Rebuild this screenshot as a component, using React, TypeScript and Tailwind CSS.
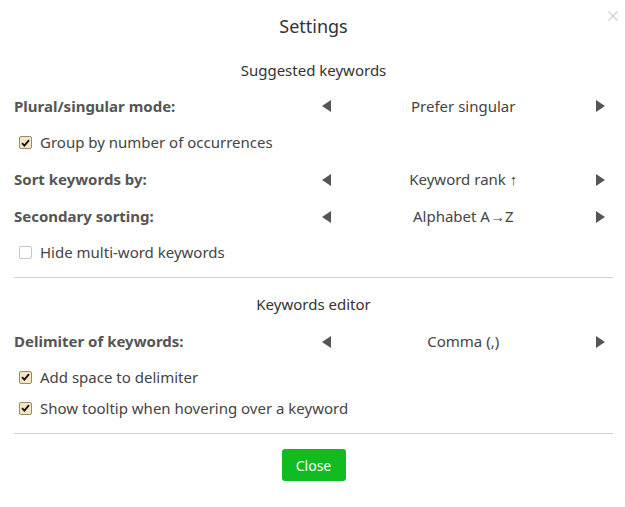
import { useState } from "react";

type Option = { label: string; values: string[] };

function Arrow({ dir }: { dir: "left" | "right" }) {
  return (
    <button type="button" className="flex w-[25px] shrink-0 items-center justify-center">
      <svg width="9" height="12" viewBox="0 0 9 12" aria-hidden>
        {dir === "left" ? (
          <polygon points="9,0 9,12 0,6" fill="#555" />
        ) : (
          <polygon points="0,0 0,12 9,6" fill="#555" />
        )}
      </svg>
    </button>
  );
}

function SelectRow({ option, className }: { option: Option; className: string }) {
  const [idx, setIdx] = useState(0);
  return (
    <div className={"flex items-center " + className}>
      <div className="w-1/2 text-[15px] font-bold text-[#555]">{option.label}</div>
      <div className="flex w-1/2 items-center" onClick={() => setIdx((idx + 1) % option.values.length)}>
        <Arrow dir="left" />
        <span className="flex-1 text-center text-[15px] text-[#444]">{option.values[idx]}</span>
        <Arrow dir="right" />
      </div>
    </div>
  );
}

function CheckRow({ label, checked, className }: { label: string; checked: boolean; className: string }) {
  const [on, setOn] = useState(checked);
  return (
    <label className={"flex cursor-pointer items-center pl-[5px] " + className} onClick={() => setOn(!on)}>
      <span
        className={
          "flex h-[13px] w-[13px] items-center justify-center rounded-[2px] border " +
          (on ? "border-[#9a8a6a] bg-[#f6e7c3]" : "border-[#c8c8c8] bg-white")
        }
      >
        {on && (
          <svg width="9" height="8" viewBox="0 0 9 8" aria-hidden>
            <path d="M1 4.2 L3.4 6.6 L8 1.2" stroke="#111" strokeWidth="1.8" fill="none" />
          </svg>
        )}
      </span>
      <span className="ml-[8px] text-[15px] text-[#444]">{label}</span>
    </label>
  );
}

export default function App() {
  return (
    <div className="relative min-h-[507px] w-[625px] bg-white pl-[14px] pr-[12px] font-['Noto_Sans',sans-serif]">
      <button type="button" className="absolute left-[608px] top-[11px]" aria-label="Close">
        <svg width="10" height="10" viewBox="0 0 10 10" aria-hidden>
          <path d="M0.5 0.5 L9.5 9.5 M9.5 0.5 L0.5 9.5" stroke="#cfcfcf" strokeWidth="1.2" />
        </svg>
      </button>
      <h1 className="flex h-[52px] items-center justify-center text-[18px] text-[#333]">Settings</h1>

      <h2 className="flex h-[36px] items-center justify-center text-[15px] text-[#333]">Suggested keywords</h2>
      <SelectRow className="h-[36px]" option={{ label: "Plural/singular mode:", values: ["Prefer singular", "Prefer plural"] }} />
      <CheckRow className="h-[37px]" label="Group by number of occurrences" checked />
      <SelectRow className="h-[37px]" option={{ label: "Sort keywords by:", values: ["Keyword rank ↑", "Keyword rank ↓"] }} />
      <SelectRow className="h-[37px]" option={{ label: "Secondary sorting:", values: ["Alphabet A→Z", "Alphabet Z→A"] }} />
      <CheckRow className="h-[35px]" label="Hide multi-word keywords" checked={false} />

      <hr className="mt-[7px] border-[#cfcfcf]" />

      <h2 className="mt-[8px] flex h-[36px] items-center justify-center text-[15px] text-[#333]">Keywords editor</h2>
      <SelectRow className="h-[39px]" option={{ label: "Delimiter of keywords:", values: ["Comma (,)", "Semicolon (;)"] }} />
      <CheckRow className="h-[32px]" label="Add space to delimiter" checked />
      <CheckRow className="h-[30px]" label="Show tooltip when hovering over a keyword" checked />

      <hr className="mt-[10px] border-[#cfcfcf]" />

      <div className="flex justify-center pt-[15px]">
        <button type="button" className="h-[32px] w-[64px] rounded-[3px] bg-[#11bb22] text-[14px] text-white">
          Close
        </button>
      </div>
    </div>
  );
}
